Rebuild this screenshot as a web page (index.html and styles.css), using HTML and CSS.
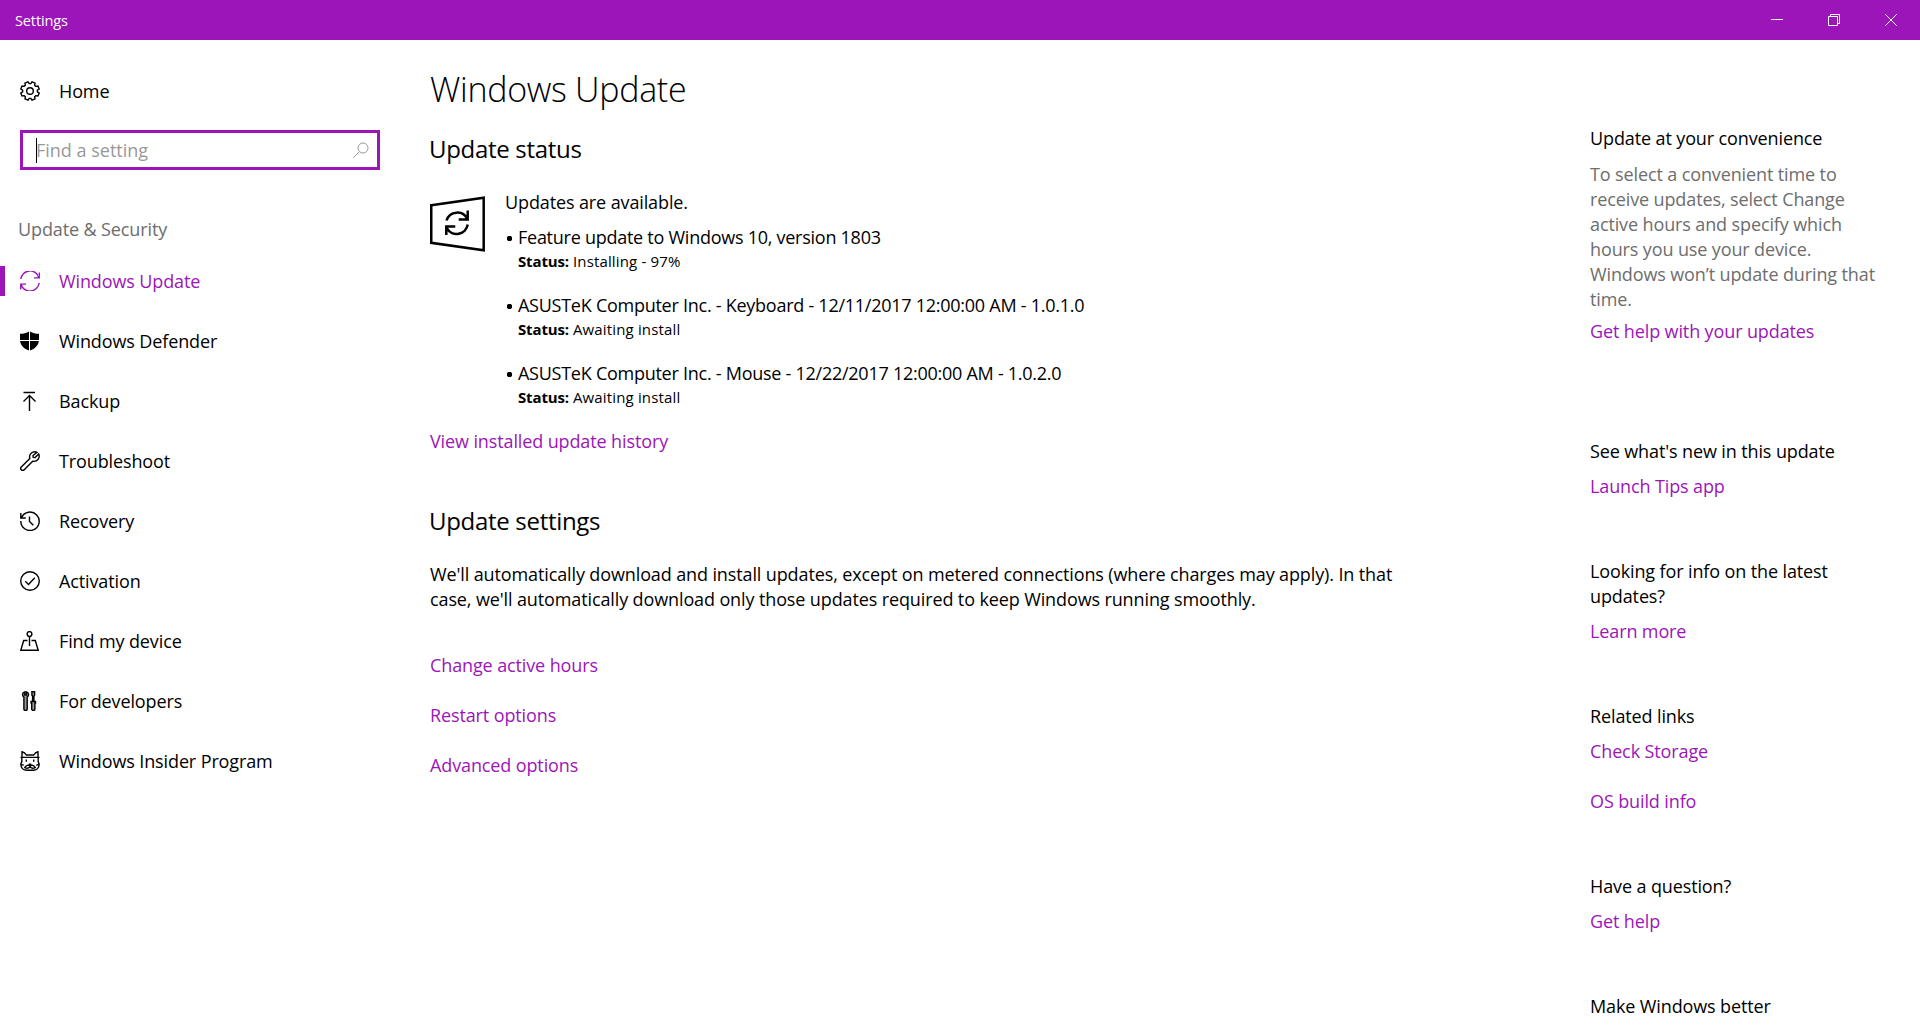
FILE: index.html
```html
<!DOCTYPE html>
<html lang="en">
<head>
  <meta charset="UTF-8" />
  <meta name="viewport" content="width=device-width, initial-scale=1.0"/>
  <title>Settings</title>
  <link rel="stylesheet" href="styles.css">
</head>

<body>
  <!-- Title bar -->
  <header class="titlebar">
    <span class="titlebar-text">Settings</span>
    <div class="window-buttons">
      <button class="window-btn" aria-label="Minimize">
        <svg width="12" height="12" viewBox="0 0 12 12"><path d="M0 5.5h12"/></svg>
      </button>
      <button class="window-btn" aria-label="Restore">
        <svg width="12" height="12" viewBox="0 0 12 12"><path d="M.5 2.5h9v9h-9zM2.5 2.500v-2h9v9h-2"/></svg>
      </button>
      <button class="window-btn" aria-label="Close">
        <svg width="12" height="12" viewBox="0 0 12 12"><path d="M.3.3l11.400 11.400M11.700.3L.3 11.700"/></svg>
      </button>
    </div>
  </header>

  <div class="layout">
    <!-- Sidebar -->
    <nav class="sidebar">
      <a href="#" class="nav-item home">
        <svg class="icon" viewBox="0 0 20 20"><path d="M10.770 2.640 12.030.82 15.050 2.070 14.660 4.250 15.750 5.340 17.930 4.950 19.180 7.970 17.360 9.230V10.770L19.180 12.030 17.930 15.050 15.750 14.660 14.660 15.750 15.050 17.930 12.030 19.180 10.770 17.360H9.230L7.970 19.180 4.950 17.930 5.340 15.750 4.250 14.660 2.070 15.050.82 12.030 2.640 10.770V9.230L.82 7.970 2.070 4.950 4.250 5.340 5.340 4.250 4.950 2.070 7.970.82 9.230 2.640z"/><circle cx="10" cy="10" r="3.300"/></svg>
        <span>Home</span>
      </a>

      <div class="search-box">
        <span class="caret"></span>
        <input type="text" placeholder="Find a setting">
        <svg class="search-icon" viewBox="0 0 16 16"><circle cx="10" cy="6" r="5"/><path d="M6.400 9.600.5 15.500"/></svg>
      </div>

      <h2 class="nav-title">Update &amp; Security</h2>

      <ul class="nav-list">
        <li><a href="#" class="nav-item active">
          <svg class="icon" viewBox="0 0 20 20"><path d="M.8 8A9.300 9.300 0 0 1 19 6.800M19.300 1.500v5.400h-5.400M19.200 12A9.300 9.300 0 0 1 1 13.200M.7 18.500v-5.400h5.400"/></svg>
          <span>Windows Update</span></a></li>
        <li><a href="#" class="nav-item">
          <svg class="icon" viewBox="0 0 20 20"><path class="solid" d="M9 .4V9H0V2.800C3.500 2.800 6.500 2 9 .4zM10 .4c2.500 1.600 5.500 2.400 9 2.400V9h-9zM.1 10H9v9.600C4 17.800.7 14.500.1 10zM10 10h8.900c-.6 4.500-3.900 7.800-8.900 9.600z"/></svg>
          <span>Windows Defender</span></a></li>
        <li><a href="#" class="nav-item">
          <svg class="icon" viewBox="0 0 20 20"><path d="M3.500 1.500h11.500M9.500 20V4.500M3.500 10.400l6-6 6 6"/></svg>
          <span>Backup</span></a></li>
        <li><a href="#" class="nav-item">
          <svg class="icon" viewBox="0 0 20 20"><path d="M17 1.300a5.200 5.200 0 0 0-7.200 6.200L1.300 15.900a2 2 0 0 0 2.900 2.900l8.500-8.600a5.200 5.200 0 0 0 6-7.200l-3.600 3.600-1.900-.2-.2-1.900z"/></svg>
          <span>Troubleshoot</span></a></li>
        <li><a href="#" class="nav-item">
          <svg class="icon" viewBox="0 0 20 20"><path d="M1.600 6.500A9.200 9.200 0 1 1 .8 10M.8 2v5h5M9.500 5.500v5l3.800 3.800"/></svg>
          <span>Recovery</span></a></li>
        <li><a href="#" class="nav-item">
          <svg class="icon" viewBox="0 0 20 20"><circle cx="10" cy="10" r="9.300"/><path d="M5.300 10.200l3.200 3.300 6.300-6.700"/></svg>
          <span>Activation</span></a></li>
        <li><a href="#" class="nav-item">
          <svg class="icon" viewBox="0 0 20 20"><circle cx="9.500" cy="3" r="2.400"/><path d="M9.500 5.400V15M7.500 9.500H3.700L.8 19.300h17.400l-2.900-9.800h-3.800"/></svg>
          <span>Find my device</span></a></li>
        <li><a href="#" class="nav-item">
          <svg class="icon" viewBox="0 0 20 20"><path class="shade" d="M4.800.9v3.200h1.600V.9c1.500.5 2.200 1.500 2.200 2.700S8 5.600 7.200 6.100v11.800c0 2-3.300 2-3.300 0V6.100C3 5.500 2.500 4.700 2.500 3.600S3.300 1.400 4.800.9zM11.900.8h2.700v3.400l-.7 1v5.300h1.600v1.600h-.6v5.800c0 2-3.200 2-3.200 0v-5.800h-.6v-1.600h1.500V5.200l-.7-1z"/></svg>
          <span>For developers</span></a></li>
        <li><a href="#" class="nav-item">
          <svg class="icon" viewBox="0 0 20 20"><path d="M2 6V.8c2 .5 3.300 1.500 4.300 3.200h7.400C14.700 2.300 16 1.300 18 .8V6M.5 6.400h19M1.800 6.800v4L.8 13c0 3.600 2.500 6.300 6 6.300h6.400c3.500 0 6-2.700 6-6.300l-1-2.200v-4M6.300 8.500v2.300M13.700 8.500v2.300M.8 13.500l3 .6M19.200 13.500l-3 .6M8.800 13.300h2.400M10 13.500v1.300c-1.500-1-4.200-.8-5.200 1.800 1.600.9 3.800.7 5.200-.6 1.400 1.300 3.600 1.500 5.200.6-1-2.600-3.700-2.800-5.200-1.800"/></svg>
          <span>Windows Insider Program</span></a></li>
      </ul>
    </nav>

    <!-- Content -->
    <main class="content">
      <h1>Windows Update</h1>

      <section class="status">
        <h2>Update status</h2>
        <div class="status-body">
          <svg class="status-icon" viewBox="0 0 55 56"><path d="M1.250 9.200 53.700 1.700v52.500L1.250 46.800z"/><path d="M16.500 24.500A11.200 11.200 0 0 1 37.300 23M37.700 14.500v9h-9M37.700 28.500A11.200 11.200 0 0 1 17 32.500M16.300 39v-8.500h9"/></svg>
          <div class="status-text">
            <p>Updates are available.</p>
            <ul class="update-list">
              <li>Feature update to Windows 10, version 1803
                <div class="update-state"><b>Status:</b> Installing - 97%</div></li>
              <li>ASUSTeK Computer Inc. - Keyboard - 12/11/2017 12:00:00 AM - 1.0.1.0
                <div class="update-state"><b>Status:</b> Awaiting install</div></li>
              <li>ASUSTeK Computer Inc. - Mouse - 12/22/2017 12:00:00 AM - 1.0.2.0
                <div class="update-state"><b>Status:</b> Awaiting install</div></li>
            </ul>
          </div>
        </div>
        <a href="#" class="link">View installed update history</a>
      </section>

      <section class="settings">
        <h2>Update settings</h2>
        <p>We'll automatically download and install updates, except on metered connections (where charges may apply). In that case, we'll automatically download only those updates required to keep Windows running smoothly.</p>
        <div class="link-list">
          <a href="#" class="link">Change active hours</a>
          <a href="#" class="link">Restart options</a>
          <a href="#" class="link">Advanced options</a>
        </div>
      </section>
    </main>

    <!-- Help column -->
    <aside class="help">
      <section class="help-block convenience">
        <h3>Update at your convenience</h3>
        <p>To select a convenient time to receive updates, select Change active hours and specify which hours you use your device. Windows won’t update during that time.</p>
        <a href="#" class="link">Get help with your updates</a>
      </section>
      <section class="help-block">
        <h3>See what's new in this update</h3>
        <a href="#" class="link">Launch Tips app</a>
      </section>
      <section class="help-block">
        <h3>Looking for info on the latest updates?</h3>
        <a href="#" class="link">Learn more</a>
      </section>
      <section class="help-block">
        <h3>Related links</h3>
        <div class="link-list">
          <a href="#" class="link">Check Storage</a>
          <a href="#" class="link">OS build info</a>
        </div>
      </section>
      <section class="help-block">
        <h3>Have a question?</h3>
        <a href="#" class="link">Get help</a>
      </section>
      <section class="help-block">
        <h3>Make Windows better</h3>
      </section>
    </aside>
  </div>
</body>
</html>
```
FILE: styles.css
```css
* {
  box-sizing: border-box;
}

body {
  font-family: 'Segoe UI', 'Open Sans', 'Noto Sans', sans-serif;
  font-size: 18px;
  line-height: 25px;
  letter-spacing: -0.12px;
  margin: 0;
  height: 100vh;
  overflow: hidden;
  background-color: #fff;
  color: #000;
}

h1, h2, h3, p, ul {
  margin: 0;
  padding: 0;
  font-weight: normal;
}

ul {
  list-style: none;
}

a {
  color: inherit;
  text-decoration: none;
}

svg {
  display: block;
  fill: none;
  stroke: currentColor;
}

/* Title bar */
.titlebar {
  height: 40px;
  padding: 0 1px 0 15px;
  display: flex;
  justify-content: space-between;
  align-items: center;
  background-color: #9c15b8;
  color: white;
}

.titlebar-text {
  font-size: 14.5px;
}

.window-buttons {
  display: flex;
}

.window-btn {
  width: 57px;
  height: 40px;
  padding: 0;
  display: flex;
  align-items: center;
  justify-content: center;
  border: none;
  background: none;
  color: white;
}

.layout {
  display: flex;
}

/* Sidebar */
.sidebar {
  width: 400px;
  padding-top: 21px;
}

.nav-item {
  height: 60px;
  padding-left: 20px;
  display: flex;
  align-items: center;
  gap: 19px;
}

.nav-item.active {
  color: #9c15b8;
  background: linear-gradient(#9c15b8, #9c15b8) no-repeat 0 15px / 5px 30px;
}

.icon {
  width: 20px;
  height: 20px;
  stroke-width: 1.4;
}

.icon .solid {
  fill: currentColor;
  stroke: none;
}

.icon .shade {
  fill: #999;
}

.search-box {
  width: 360px;
  height: 40px;
  margin: 9px 0 0 20px;
  padding: 0 8px 0 13px;
  display: flex;
  align-items: center;
  border: 3px solid #9c15b8;
}

.search-box input {
  flex: 1;
  min-width: 0;
  padding: 0;
  border: none;
  outline: none;
  background: none;
  font: inherit;
  letter-spacing: 0;
}

.search-box input::placeholder {
  color: #999;
}

.caret {
  width: 1px;
  height: 25px;
  margin-right: -1px;
  background-color: #000;
}

.search-icon {
  width: 16px;
  height: 16px;
  color: #999;
}

.nav-title {
  margin: 47px 0 9px 18px;
  font-size: 18px;
  color: #6d6d6d;
}

/* Content */
.content {
  width: 1190px;
  padding: 25px 0 0 30px;
}

.content h1 {
  font-size: 34px;
  font-weight: 300;
  line-height: 48px;
  letter-spacing: -0.3px;
}

.content h2 {
  margin-left: -1px;
  font-size: 24px;
  line-height: 34px;
  letter-spacing: -0.3px;
}

.status h2 {
  margin-top: 19px;
}

.status-body {
  margin-top: 24px;
  display: flex;
  gap: 20px;
}

.status-icon {
  width: 55px;
  height: 56px;
  margin-top: 6px;
  stroke-width: 2.5;
}

.update-list {
  margin-top: 10px;
}

.update-list li {
  height: 68px;
  padding-left: 13px;
  letter-spacing: -0.26px;
  background: radial-gradient(circle, #000 2.5px, transparent 3px) no-repeat 1px 10px / 7px 7px;
}

.update-state {
  font-size: 15px;
  line-height: 22px;
  letter-spacing: 0.15px;
}

.update-state b {
  letter-spacing: -0.15px;
}

.status .link {
  display: block;
}

.settings h2 {
  margin-top: 50px;
}

.settings p {
  width: 980px;
  margin-top: 24px;
}

.link {
  color: #9c15b8;
}

.link-list {
  display: flex;
  flex-direction: column;
  gap: 25px;
}

.settings .link-list {
  margin-top: 41px;
}

/* Help column */
.help {
  width: 294px;
  padding-top: 86px;
}

.help-block {
  margin-bottom: 60px;
}

.help-block h3 {
  margin-bottom: 10px;
  font-size: 18px;
}

.help-block p {
  margin: 11px 0 7px;
  color: #6d6d6d;
}

.convenience {
  margin-bottom: 95px;
}
```
